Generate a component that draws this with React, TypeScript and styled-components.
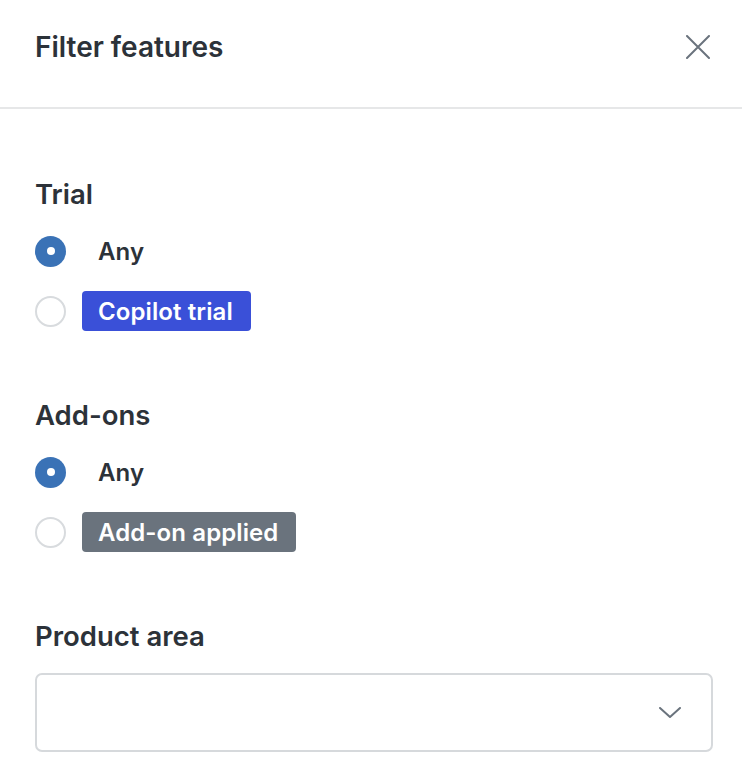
import styled, { createGlobalStyle } from "styled-components";

const GlobalStyle = createGlobalStyle`
    body {
        margin: 0;
        background: #ffffff;
        font-family: Inter, "Noto Sans", "Liberation Sans", sans-serif;
        color: #2c3239;
    }
`;

const Panel = styled.div`
    width: 742px;
    min-height: 774px;
    background: #ffffff;
`;
const Header = styled.header`
    height: 109px;
    display: flex;
    align-items: center;
    justify-content: space-between;
    padding: 0 32px 0 35px;
    border-bottom: 2px solid #e6e7e8;
    box-sizing: border-box;
`;
const Title = styled.h1`
    margin: 0;
    font-size: 28px;
    font-weight: 600;
    line-height: 32px;
    margin-top: -14px;
`;
const CloseButton = styled.button`
    border: 0;
    background: none;
    padding: 0;
    width: 24px;
    height: 24px;
    display: flex;
    margin-top: -13px;
    cursor: pointer;
`;
const Body = styled.div`
    padding: 69px 29px 0 35px;
    display: flex;
    flex-direction: column;
    gap: 68px;
`;
const Section = styled.section`
    display: flex;
    flex-direction: column;
`;
const SectionTitle = styled.h2`
    margin: 0 0 21px;
    font-size: 27.5px;
    font-weight: 600;
    line-height: 32px;
`;
const Options = styled.div`
    display: flex;
    flex-direction: column;
    gap: 20px;
`;
const Option = styled.label`
    display: flex;
    align-items: center;
    height: 40px;
    gap: 16px;
    cursor: pointer;
`;
const Radio = styled.span<{ checked: boolean }>`
    width: 31px;
    height: 31px;
    border-radius: 50%;
    box-sizing: border-box;
    flex-shrink: 0;
    display: flex;
    align-items: center;
    justify-content: center;
    background: ${(props) => (props.checked ? "#3a72b6" : "#ffffff")};
    border: ${(props) => (props.checked ? "none" : "2px solid #d8dbde")};
    &::after {
        content: "";
        display: ${(props) => (props.checked ? "block" : "none")};
        width: 8px;
        height: 8px;
        border-radius: 50%;
        background: #ffffff;
    }
`;
const Label = styled.span<{ tone?: string }>`
    display: inline-flex;
    align-items: center;
    height: 40px;
    padding: 0 18px 0 16px;
    border-radius: 4px;
    font-size: 24px;
    font-weight: 600;
    letter-spacing: 0.1px;
    background: ${(props) => props.tone || "transparent"};
    color: ${(props) => (props.tone ? "#ffffff" : "#2c3239")};
`;
const Select = styled.div`
    height: 79px;
    border: 2px solid #d6d9dc;
    border-radius: 7px;
    box-sizing: border-box;
    display: flex;
    align-items: center;
    justify-content: flex-end;
    padding-right: 30px;
`;

function XIcon() {
    return (
        <svg width="24" height="24" viewBox="0 0 24 24" fill="none" stroke="#6a737d" strokeWidth="2" strokeLinecap="round">
            <path d="M1 1L23 23M23 1L1 23" />
        </svg>
    );
}

function ChevronIcon() {
    return (
        <svg width="22" height="12" viewBox="0 0 22 12" fill="none" stroke="#6a737d" strokeWidth="2" strokeLinecap="round" strokeLinejoin="round">
            <path d="M1 1L11 10L21 1" />
        </svg>
    );
}

const sections = [
    { title: "Trial", badge: "Copilot trial", tone: "#3a50d8" },
    { title: "Add-ons", badge: "Add-on applied", tone: "#6a737d" },
];

export default function App() {
    return (
        <>
            <GlobalStyle />
            <Panel>
                <Header>
                    <Title>Filter features</Title>
                    <CloseButton aria-label="Close">
                        <XIcon />
                    </CloseButton>
                </Header>
                <Body>
                    {sections.map((s) => (
                        <Section key={s.title}>
                            <SectionTitle>{s.title}</SectionTitle>
                            <Options>
                                <Option>
                                    <Radio checked />
                                    <Label>Any</Label>
                                </Option>
                                <Option>
                                    <Radio checked={false} />
                                    <Label tone={s.tone}>{s.badge}</Label>
                                </Option>
                            </Options>
                        </Section>
                    ))}
                    <Section>
                        <SectionTitle>Product area</SectionTitle>
                        <Select>
                            <ChevronIcon />
                        </Select>
                    </Section>
                </Body>
            </Panel>
        </>
    );
}
